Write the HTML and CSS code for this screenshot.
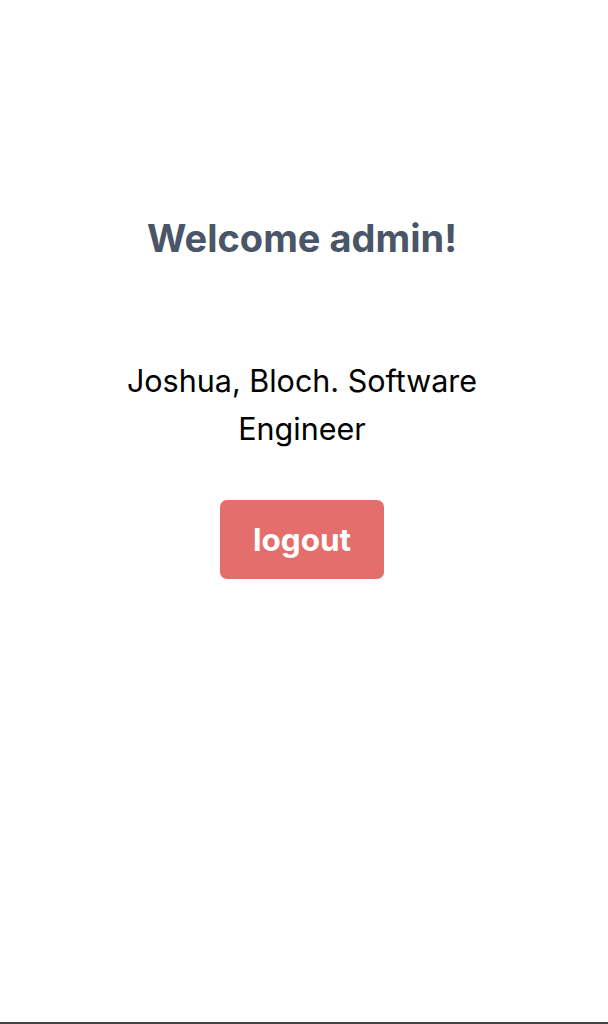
FILE: index.html
```html
<!DOCTYPE html>
<html>
<head>
<meta charset="utf-8">
<link rel="stylesheet" href="styles.css">
</head>
<body>
<main class="page">
  <h1 class="title">Welcome admin!</h1>
  <p class="info">Joshua, Bloch. Software Engineer</p>
  <button class="logout">logout</button>
</main>
</body>
</html>
```
FILE: styles.css
```css
html, body {
  margin: 0;
  padding: 0;
  height: 100%;
}
body {
  font-family: Inter, "Noto Sans", sans-serif;
  background: #fff;
  box-sizing: border-box;
  border-bottom: 2px solid #444;
}
.page {
  display: flex;
  flex-direction: column;
  align-items: center;
  padding-top: 214px;
  padding-right: 4px;
}
.title {
  margin: 0;
  font-size: 38px;
  line-height: 48px;
  font-weight: 700;
  color: #4a5568;
}
.info {
  margin: 95px 0 0;
  width: 390px;
  text-align: center;
  font-size: 30.5px;
  line-height: 48px;
  color: #000;
}
.logout {
  margin-top: 47px;
  width: 164px;
  height: 79px;
  border: none;
  border-radius: 7px;
  background: #e46e6b;
  color: #fff;
  font-family: Inter, "Noto Sans", sans-serif;
  font-size: 31.5px;
  font-weight: 700;
  padding: 0;
}
```
